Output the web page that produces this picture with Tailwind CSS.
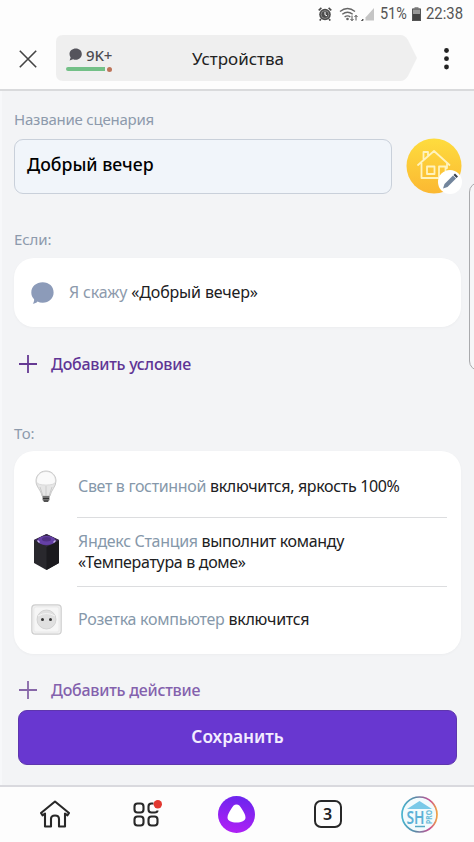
<!DOCTYPE html>
<html lang="ru">
<head>
<meta charset="utf-8">
<title>Устройства</title>
<script src="https://cdn.jsdelivr.net/npm/@tailwindcss/browser@4"></script>
</head>
<body class="relative flex h-[842px] w-[474px] flex-col overflow-hidden bg-[#f3f4f6] font-['Noto_Sans',sans-serif] text-[#202022] whitespace-nowrap">

<div class="flex h-7 shrink-0 items-center justify-end gap-[3px] bg-[#fdfdfd] pr-[11px] font-[Roboto,sans-serif] text-[16px] text-[#555]">
  <svg class="h-[14px] w-[14px]" viewBox="0 0 14 14" fill="none"><circle cx="7" cy="7.5" r="5.8" fill="#4b4b4b"/><path d="M.7 3.4 3.4.9M13.3 3.4 10.6.9M3 12l-1.3 1.6M11 12l1.3 1.6" stroke="#4b4b4b" stroke-width="1.6"/><circle cx="7" cy="7.5" r="3.9" stroke="#aaa" stroke-width=".6"/><path d="M7 4.8v3l2 1" stroke="#fff"/></svg>
  <svg class="ml-1 h-[15px] w-[36px]" viewBox="0 0 36 15" fill="none"><path d="M1 4.500q7.500-6 15 0M3.300 7.300q5.200-4.200 10.400 0M5.600 10q2.900-2.300 5.800 0" stroke="#666" stroke-width="1.400"/><circle cx="8.500" cy="12" r="1.300" fill="#666"/><path d="M13 8.500v5m-1.500-1.500 1.500 1.700 1.500-1.700M17 13.500v-5m-1.500 1.500L17 8.300l1.500 1.700" stroke="#555"/><path d="M35 1v12.500H26.500V10.500Z" fill="#c5c5c5"/><path d="M24 12v1.500h-1.500Z" fill="#555" stroke="#555"/></svg>
  <span class="ml-[2px] w-[27px] origin-left scale-x-[.9] scale-y-[1.05]">51%</span>
  <svg class="ml-[2px] h-[14px] w-[9px]" viewBox="0 0 9 14"><path d="M2.500 0h4v1.500H9V14H0V1.500h2.500Z" fill="#999"/><path d="M0 7h9v7H0Z" fill="#444"/><path d="M.5 2v11.500h8V2Z" fill="none" stroke="#555"/></svg>
  <span class="ml-[2px] w-[37px] origin-left scale-x-[.93] scale-y-[1.05]">22:38</span>
</div>

<header class="flex h-[63px] shrink-0 items-start border-b-2 border-[#d9dadc] bg-[#fdfdfd] pt-[7px]">
  <svg class="mt-[15px] ml-[19px] h-[18px] w-[18px]" viewBox="0 0 18 18" stroke="#444" stroke-width="1.600"><path d="m.8.800 16.400 16.400M17.200.8.800 17.200"/></svg>
  <div class="relative ml-[19px] h-[46px] w-[361px]">
    <svg class="absolute inset-0 h-full w-full" viewBox="0 0 361 46"><path d="M7 0H344q5 0 8 5l9 18-9 18q-3 5-8 5H7q-7 0-7-7V7q0-7 7-7Z" fill="#efefef"/></svg>
    <div class="relative flex h-full items-center">
      <div class="ml-[10px] w-[47px]">
        <div class="flex h-5 items-center gap-1 pl-[3px] text-[15px] leading-5 text-[#4d4c52]">
          <svg class="h-[13px] w-[13px] shrink-0" viewBox="0 0 13 13"><path d="M6.800.5c3.400 0 6 2.300 6 5.500s-2.600 5.800-6 5.800c-1 0-2-.2-2.700-.6L.6 12.400l1-3C.9 8.500.5 7.300.5 6 .5 2.800 3.400.5 6.800.5Z" fill="#55545c"/></svg>
          <span class="font-medium -tracking-[.1px]">9K+</span>
        </div>
        <div class="mt-[2px] flex gap-[2px]"><div class="h-[4px] w-[39px] rounded-l-full bg-[#73c087]"></div><div class="h-[5px] w-[5px] rounded-full bg-[#bd7459]"></div></div>
      </div>
      <div class="mt-px ml-[79px] text-[17px] text-[#222]"><span>Устройства</span></div>
    </div>
  </div>
  <svg class="mt-[13px] ml-[27px] h-[22px] w-[5px]" viewBox="0 0 5 22" fill="#222"><circle cx="2.500" cy="2.500" r="2.400"/><circle cx="2.500" cy="10.700" r="2.400"/><circle cx="2.500" cy="19" r="2.400"/></svg>
</header>

<main class="flex h-[694px] shrink-0 flex-col border-l-2 border-[#f7f8fa] pl-3 text-[16px]">
  <div class="mt-[18px] h-5 text-[15px] leading-5 tracking-[-.22px] text-[#8d9aac]"><span>Название сценария</span></div>
  <div class="mt-[9px] flex items-center">
    <div class="flex h-[55px] w-[378px] items-center rounded-[9px] border border-[#c9d0da] bg-[#f1f5fa] pb-[3px] pl-[12px] text-[17.700px] font-medium text-black"><span>Добрый вечер</span></div>
    <svg class="ml-[14px] h-[56px] w-[56px]" viewBox="0 0 56 56" fill="none"><defs><linearGradient id="sun" x1="0" y1="0" x2="0" y2="1"><stop stop-color="#fedc3e"/><stop offset="1" stop-color="#fbb832"/></linearGradient></defs><circle cx="28" cy="28" r="27.500" fill="url(#sun)"/><path d="M12 27 28 13 43.500 27M15.500 25v15h17M41 25v5M17.500 21V14h4.500v3M21 28.500h7.500v7.500H21ZM33 40V28.500h6.500v4" stroke="#fff3bd" stroke-width="1.800" stroke-linejoin="round" stroke-linecap="round"/><circle cx="44" cy="44" r="12" fill="#fff"/><path d="m37 50.500 1.500-4.500 8.500-8.500 3 3-8.500 8.500Z" fill="#72859c"/><path d="m47.500 37 1.500-1.500 3 3-1.500 1.500Z" fill="#39414c"/></svg>
  </div>
  <div class="mt-[35px] h-5 text-[15px] leading-5 tracking-[-.1px] text-[#8d9aac]"><span>Если:</span></div>
  <div class="mt-[9px] flex h-[69px] w-[447px] items-center rounded-[20px] bg-white pl-[17px] shadow-[0_1px_3px_rgba(0,0,0,.03)]">
    <svg class="h-[22px] w-[23px]" viewBox="0 0 23 22"><path d="M11.700.3C18 .3 22.600 4.500 22.600 10.500S18 20.700 11.700 20.700c-2 0-3.700-.4-5.200-1.200-1 1.400-2.800 2.200-4.700 2.200 1-1.200 1.500-2.800 1.300-4.400C1.300 15.500.3 13.200.3 10.500.3 4.500 5.400.3 11.700.3Z" fill="#8c9bb9"/></svg>
    <span class="ml-[15px] pb-px tracking-[-.15px] text-[#8d9aac]">Я скажу <span class="text-[#202022]">«Добрый вечер»</span></span>
  </div>
  <div class="mt-[27px] flex h-5 items-center font-medium text-[#5f3595]">
    <svg class="ml-[5px] h-[18px] w-[18px]" viewBox="0 0 18 18" stroke="#653a93" stroke-width="1.800"><path d="M9 0v18M0 9h18"/></svg>
    <span class="ml-[14px] tracking-[-.25px]">Добавить условие</span>
  </div>
  <div class="mt-[49px] h-5 text-[15px] leading-5 tracking-[-.1px] text-[#8d9aac]"><span>То:</span></div>
  <div class="mt-2 flex h-[203px] w-[447px] flex-col rounded-[20px] bg-white pr-[14px] pl-[17px] shadow-[0_1px_3px_rgba(0,0,0,.03)]">
    <div class="flex h-[66px] pt-[5px]">
      <div class="flex w-[47px] items-center pl-1"><svg class="h-[33px] w-[22px]" viewBox="0 0 22 33"><path d="M11 1C5 1 1 5.500 1 11c0 6 5 9 6 15h8c1-6 6-9 6-15 0-5.500-4-10-10-10Z" fill="#e6e6e6" stroke="#bebebe" stroke-width=".8"/><path d="M1.500 12C1 6 5 1.500 11 1.500S21 6 20.500 12q-1 3-9.500 3t-9.500-3Z" fill="#fafafa" stroke="#ccc" stroke-width=".6"/><path d="m5 17 3 9m9-9-3 9M11 16v10" stroke="#c5c5c5" stroke-width=".8"/><path d="M7.500 26h7v4L13 32H9l-1.500-2Z" fill="#747474"/><path d="M8 28.500h6M9 31h4" stroke="#333"/></svg></div>
      <span class="self-center pb-px tracking-[-.33px] text-[#8698aa]">Свет в гостинной <span class="text-[#202022]">включится, яркость 100%</span></span>
    </div>
    <div class="ml-[46px] h-px bg-[#dcdddf]"></div>
    <div class="flex h-[68px] items-center pb-px">
      <div class="w-[47px] pl-[3px]"><svg class="h-[36px] w-[25px]" viewBox="0 0 25 36"><path d="M12.500 0 25 6v23l-12.500 7L0 29V6Z" fill="#29282d"/><path d="M12.500 13 25 7v22l-12.500 7Z" fill="#1b1a1e"/><path d="M12.500 0 25 6l-12.500 6.500L0 6Z" fill="#3a2a50"/><ellipse cx="12.500" cy="6.500" rx="9" ry="4.500" fill="#6540a6"/><ellipse cx="12.500" cy="5.200" rx="4.500" ry="2.200" fill="#503184"/><path d="m3.500 6.500 2 2M21.500 6.500l-2 2" stroke="#c9b7ec" stroke-width="1.300"/></svg></div>
      <div class="leading-[21px] tracking-[-.32px] text-[#8698aa]"><div><span>Яндекс Станция <span class="text-[#202022]">выполнит команду</span></span></div><div><span class="text-[#202022]">«Температура в доме»</span></div></div>
    </div>
    <div class="ml-[46px] h-px bg-[#dcdddf]"></div>
    <div class="flex h-[67px] items-center pb-[2px]">
      <div class="w-[47px]"><svg class="h-[31px] w-[31px]" viewBox="0 0 31 31"><rect x=".8" y=".8" width="29.400" height="29.400" rx="3.500" fill="#f0f0f0" stroke="#cfcfcf" stroke-width="1.200"/><rect x="3" y="3" width="25" height="25" rx="2" fill="#f6f6f6" stroke="#e6e6e6" stroke-width=".7"/><circle cx="15.500" cy="15.500" r="9.500" fill="#e0e0e0" stroke="#cdcdcd" stroke-width=".8"/><path d="M7 12q8.500-5 17 0" fill="none" stroke="#f5f5f5"/><circle cx="11.500" cy="15.500" r="1.500" fill="#333"/><circle cx="19.500" cy="15.500" r="1.500" fill="#333"/></svg></div>
      <span class="pb-px tracking-[-.26px] text-[#8698aa]">Розетка компьютер <span class="text-[#202022]">включится</span></span>
    </div>
  </div>
  <div class="mt-[26px] flex h-5 items-center font-medium text-[#8361ad]">
    <svg class="ml-[5px] h-[18px] w-[18px]" viewBox="0 0 18 18" stroke="#8767a8" stroke-width="1.800"><path d="M9 0v18M0 9h18"/></svg>
    <span class="ml-[14px] tracking-[-.25px]">Добавить действие</span>
  </div>
  <button class="mt-[10px] ml-1 flex h-[55px] w-[439px] items-center justify-center rounded-[9px] border border-[#5e36ad] bg-[#6837d0] pb-[2px] text-[17.300px] font-semibold text-[#f3edff]"><span>Сохранить</span></button>
</main>

<nav class="relative h-[57px] shrink-0 border-t-2 border-[#d9d9de] bg-[#fdfdfd]">
  <div class="grid h-[54px] grid-cols-[109px_73px_109px_73px_110px] items-center justify-items-center">
    <svg class="h-[28px] w-[30px]" viewBox="0 0 30 28" fill="none" stroke="#282828" stroke-width="2.100" stroke-linejoin="round" stroke-linecap="round"><path d="M5 13.500 2.500 15.300 1 13 15 1.500 29 13l-1.500 2.300-2.500-1.800V26.500H19V19q0-3.500-4-3.500T11 19v7.500H5Z"/></svg>
    <svg class="h-[28px] w-[32px]" viewBox="0 0 32 28" fill="none" stroke="#282828" stroke-width="2.100"><rect x="4.500" y="3.500" width="9" height="9" rx="3"/><path d="M23.500 3.500h-2q-3 0-3 3v3q0 3 3 3h3q3 0 3-2"/><rect x="4.500" y="16.500" width="9" height="9" rx="3"/><rect x="18.500" y="16.500" width="9" height="9" rx="3"/><circle cx="27.800" cy="4.300" r="4.200" fill="#e23830" stroke="none"/></svg>
    <svg class="h-[37px] w-[37px]" viewBox="0 0 37 37"><defs><linearGradient id="al" x1=".6" y1="0" x2=".4" y2="1"><stop stop-color="#6b25ee"/><stop offset="1" stop-color="#b020f5"/></linearGradient></defs><circle cx="18.500" cy="18.500" r="18.500" fill="url(#al)"/><path d="M18.500 8.500c2.300 0 3.600 1.500 5.200 4.300 2.200 3.700 3.800 6.200 3.800 8.700 0 3.500-4 5-9 5s-9-1.500-9-5c0-2.500 1.600-5 3.800-8.700C14.900 10 16.200 8.500 18.500 8.500Z" fill="#fff"/></svg>
    <div class="flex h-[28px] w-[28px] items-center justify-center rounded-[7px] border-2 border-[#282828] text-[16px] font-semibold">3</div>
    <svg class="h-[37px] w-[37px]" viewBox="0 0 37 37"><defs><linearGradient id="ring"><stop stop-color="#49b4cf"/><stop offset=".4" stop-color="#5e86a3"/><stop offset=".8" stop-color="#c94f93"/><stop offset="1" stop-color="#f0a345"/></linearGradient></defs><circle cx="18.500" cy="18.500" r="17.500" fill="#f2fbfd" stroke="url(#ring)" stroke-width="1.700"/><path d="M18.500 5 31 13H6Z" fill="#79c9e8"/><path d="M14 30.500h10" stroke="#55a9c5" stroke-width="1.500"/><text x="5.500" y="27.500" font-family="Noto Sans, sans-serif" font-weight="600" font-size="18" textLength="18" lengthAdjust="spacingAndGlyphs" fill="#5bb1d6">SH</text><text transform="translate(31 28) rotate(-90)" font-family="Noto Sans, sans-serif" font-weight="700" font-size="8" textLength="14" lengthAdjust="spacingAndGlyphs" fill="#6cbbd8">PRO</text></svg>
  </div>
</nav>

<div class="absolute top-[182px] left-[469px] h-[189px] w-4 rounded-l-[10px] border border-[#a9aaad] bg-[#f6f6f8]"></div>
</body>
</html>
